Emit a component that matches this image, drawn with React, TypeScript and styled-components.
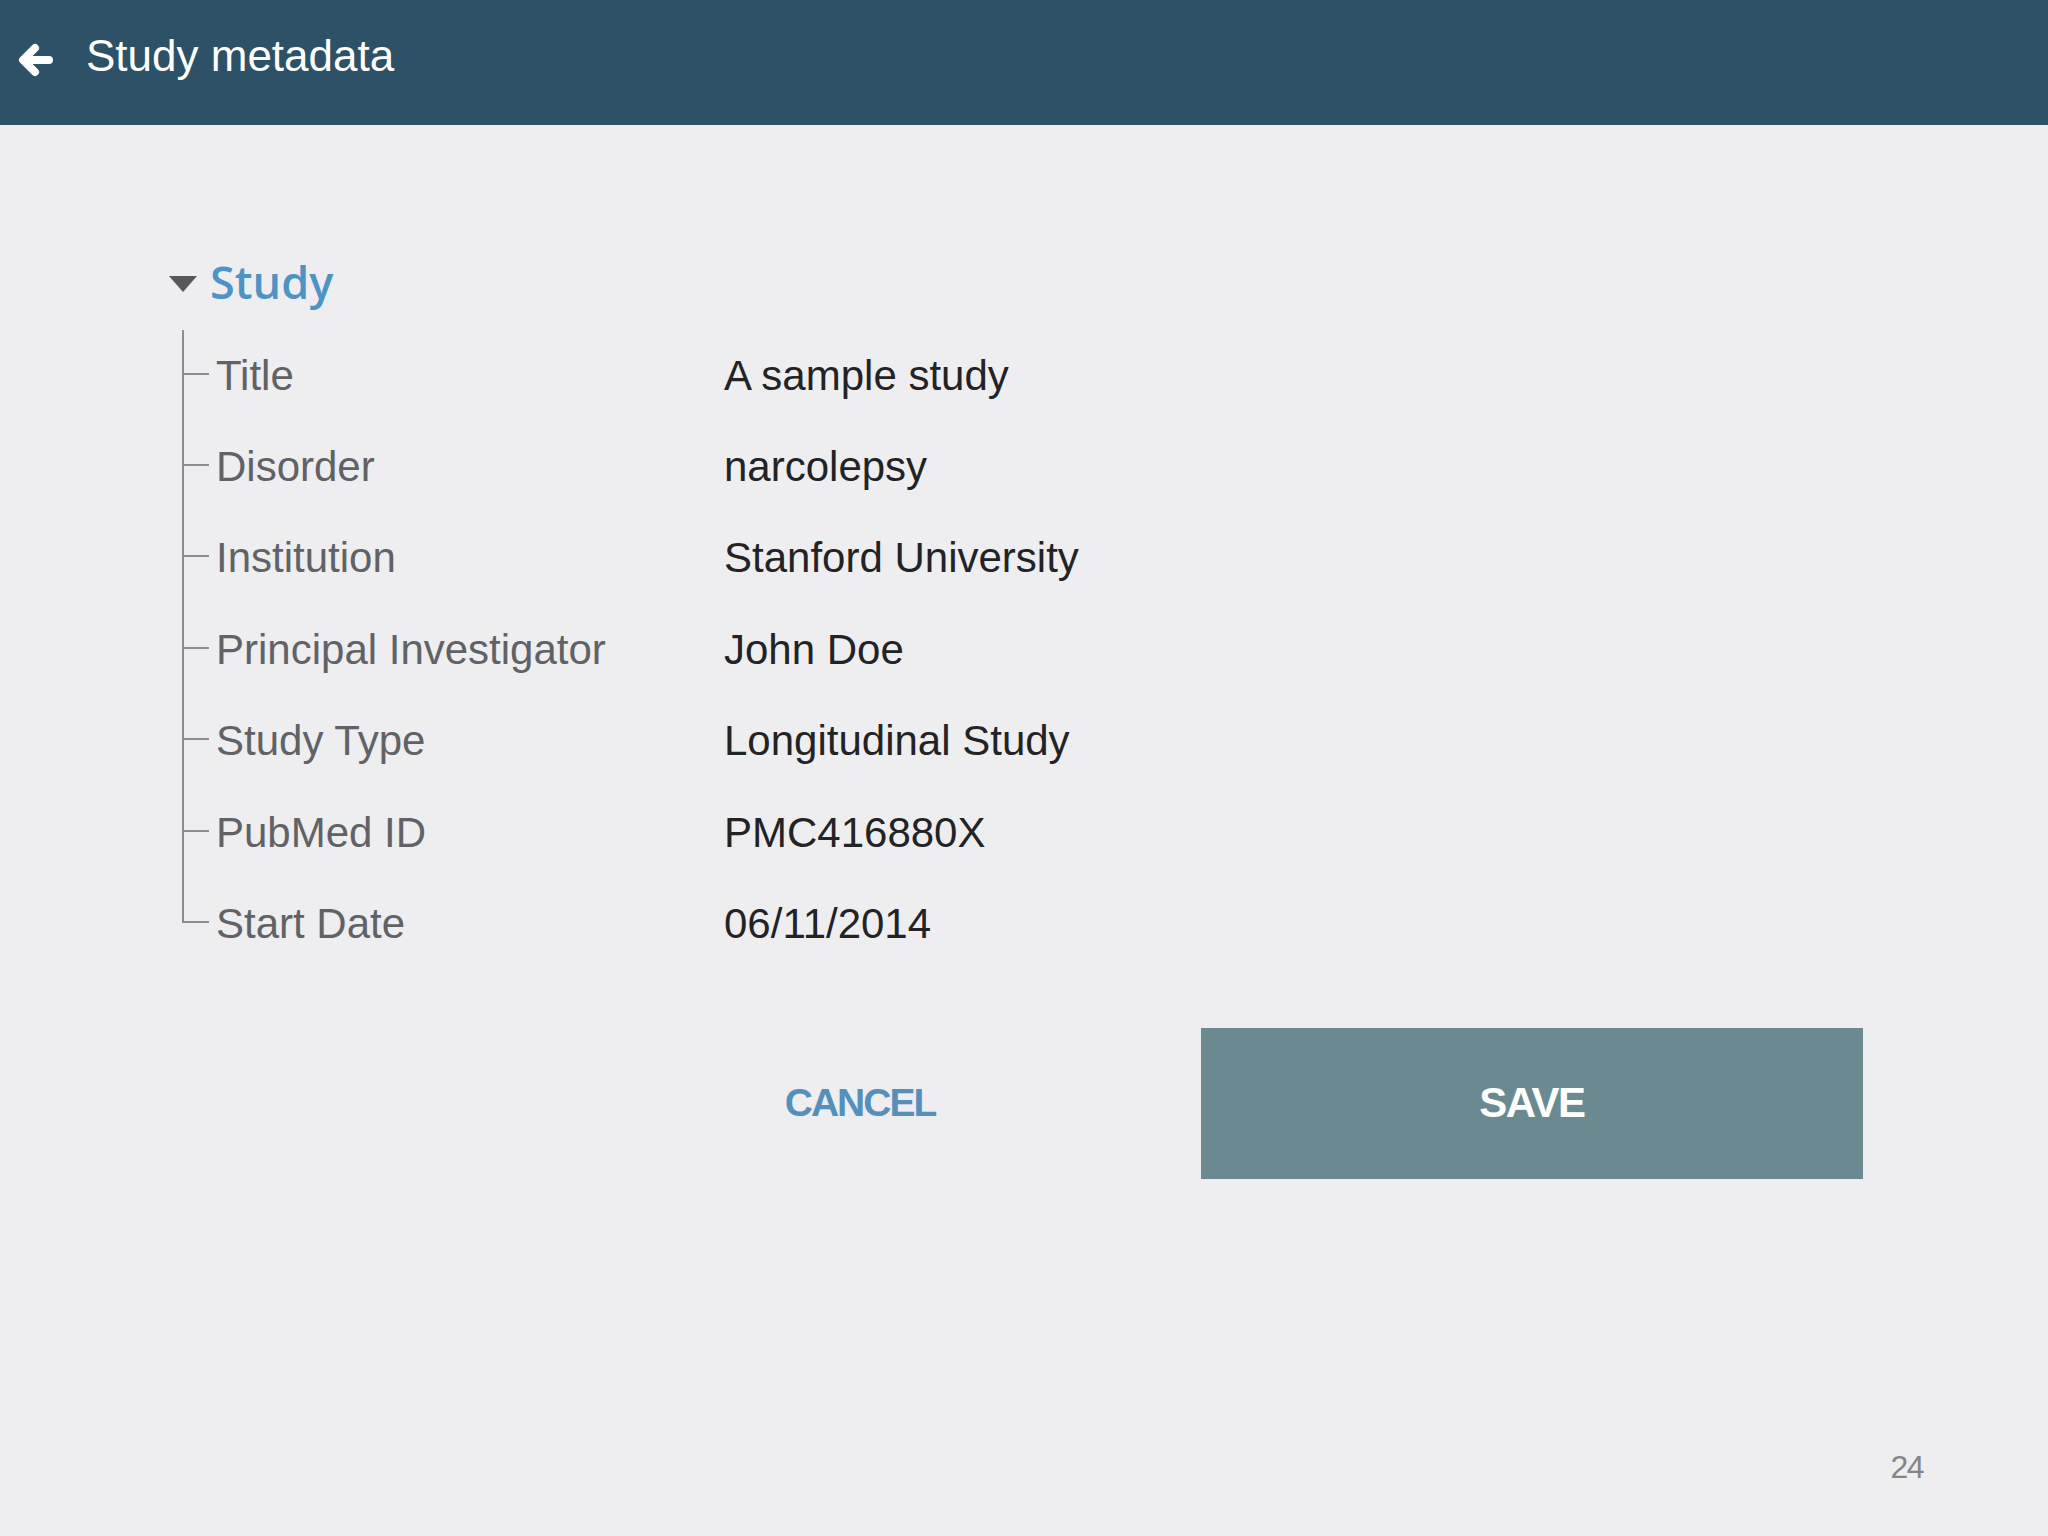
import React from "react";
import styled, { createGlobalStyle } from "styled-components";

const GlobalStyle = createGlobalStyle`
  html, body {
    margin: 0;
    padding: 0;
    background: #eeedf0;
  }
  body {
    font-family: "Liberation Sans", Arial, sans-serif;
  }
`;

const Page = styled.div`
  min-height: 100vh;
  display: flex;
  flex-direction: column;
  background: #eeedf0;
`;

const Header = styled.header`
  height: 125px;
  background: #2d5166;
  display: flex;
  align-items: center;
  padding-left: 16px;
  gap: 32px;
  box-sizing: border-box;
`;

const BackButton = styled.button`
  border: none;
  background: none;
  padding: 0;
  display: flex;
  align-items: center;
  cursor: pointer;
  margin-top: -6px;
`;

const HeaderTitle = styled.h1`
  margin: 0;
  margin-top: -14px;
  color: #ffffff;
  font-family: "Liberation Sans", Arial, sans-serif;
  font-size: 44px;
  font-weight: 400;
  letter-spacing: 0;
`;

const Main = styled.main`
  padding: 127px 0 0 169px;
  display: flex;
  flex-direction: column;
`;

const SectionHeader = styled.div`
  height: 60px;
  display: flex;
  align-items: center;
  gap: 13px;
`;

const Caret = styled.span`
  width: 0;
  height: 0;
  border-left: 14px solid transparent;
  border-right: 14px solid transparent;
  border-top: 16px solid #58585c;
  margin-top: 4px;
`;

const SectionTitle = styled.span`
  font-family: "Open Sans", sans-serif;
  font-weight: 600;
  font-size: 45px;
  line-height: 60px;
  color: #4d94c4;
`;

const Tree = styled.div`
  margin-top: 18px;
  margin-left: 13px;
  display: flex;
  flex-direction: column;
`;

const Row = styled.div<{ $last?: boolean }>`
  position: relative;
  height: 91.4px;
  display: grid;
  grid-template-columns: 508px 1fr;
  align-items: center;
  padding-left: 34px;

  &::before {
    content: "";
    position: absolute;
    left: 0;
    top: 0;
    width: 2px;
    height: ${(p) => (p.$last ? "calc(50% - 1px)" : "100%")};
    background: #8d8d90;
  }
  &::after {
    content: "";
    position: absolute;
    left: 0;
    top: calc(50% - 3px);
    width: 27px;
    height: 2px;
    background: #8d8d90;
  }
`;

const Label = styled.span`
  font-family: "Liberation Sans", Arial, sans-serif;
  font-size: 42px;
  color: #606266;
`;

const Value = styled.span`
  font-family: "Liberation Sans", Arial, sans-serif;
  font-size: 42px;
  color: #232325;
`;

const ButtonRow = styled.div`
  margin-top: 58px;
  margin-left: 554px;
  display: flex;
  align-items: center;
  gap: 204px;
`;

const CancelButton = styled.button`
  width: 274px;
  height: 151px;
  border: none;
  background: transparent;
  font-family: "Liberation Sans", Arial, sans-serif;
  font-weight: 700;
  font-size: 39px;
  letter-spacing: -2px;
  color: #5590bb;
  cursor: pointer;
`;

const SaveButton = styled.button`
  width: 662px;
  height: 151px;
  border: none;
  background: #6b8990;
  font-family: "Liberation Sans", Arial, sans-serif;
  font-weight: 700;
  font-size: 42px;
  letter-spacing: -1.5px;
  color: #ffffff;
  cursor: pointer;
`;

const Footer = styled.footer`
  margin-top: auto;
  display: flex;
  justify-content: flex-end;
  padding: 0 125px 54px 0;
`;

const PageNumber = styled.span`
  font-family: "Liberation Sans", Arial, sans-serif;
  font-size: 32px;
  line-height: 30px;
  letter-spacing: -1.5px;
  color: #858589;
`;

const rows: [string, string][] = [
  ["Title", "A sample study"],
  ["Disorder", "narcolepsy"],
  ["Institution", "Stanford University"],
  ["Principal Investigator", "John Doe"],
  ["Study Type", "Longitudinal Study"],
  ["PubMed ID", "PMC416880X"],
  ["Start Date", "06/11/2014"],
];

export default function App() {
  return (
    <Page>
      <GlobalStyle />
      <Header>
        <BackButton aria-label="Back">
          <svg width="38" height="40" viewBox="0 0 38 40" fill="none">
            <path
              d="M33 20H9M19 8L7 20L19 32"
              stroke="#ffffff"
              strokeWidth="8"
              strokeLinecap="round"
              strokeLinejoin="round"
            />
          </svg>
        </BackButton>
        <HeaderTitle>Study metadata</HeaderTitle>
      </Header>
      <Main>
        <SectionHeader>
          <Caret />
          <SectionTitle>Study</SectionTitle>
        </SectionHeader>
        <Tree>
          {rows.map(([label, value], i) => (
            <Row key={label} $last={i === rows.length - 1}>
              <Label>{label}</Label>
              <Value>{value}</Value>
            </Row>
          ))}
        </Tree>
        <ButtonRow>
          <CancelButton>CANCEL</CancelButton>
          <SaveButton>SAVE</SaveButton>
        </ButtonRow>
      </Main>
      <Footer>
        <PageNumber>24</PageNumber>
      </Footer>
    </Page>
  );
}
